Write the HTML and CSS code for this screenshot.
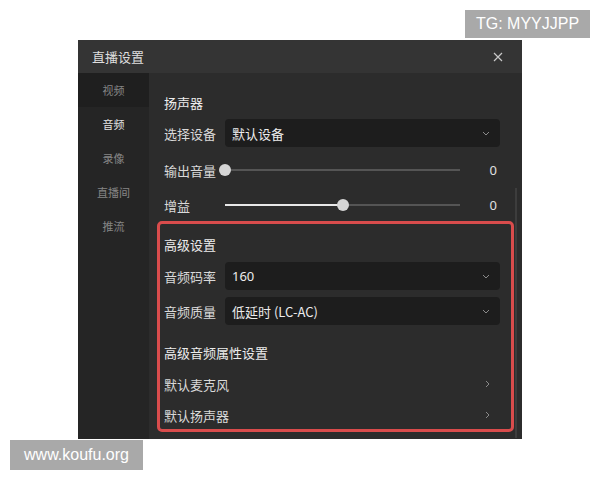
FILE: index.html
```html
<!DOCTYPE html>
<html lang="zh-CN">
<head>
    <meta charset="UTF-8">
    <title>直播设置</title>
    <link rel="stylesheet" href="styles.css">
</head>
<body>
    <div class="page">
        <div class="badge badge-tg">TG: MYYJJPP</div>

        <div class="dialog">
            <div class="titlebar">
                <span class="title">直播设置</span>
                <svg class="close" width="10" height="10" viewBox="0 0 10 10">
                    <path d="M1 1L9 9M9 1L1 9" stroke="#c8c8c8" stroke-width="1.2" fill="none"/>
                </svg>
            </div>
            <div class="main">
                <div class="sidebar">
                    <div class="nav-item hover">视频</div>
                    <div class="nav-item active">音频</div>
                    <div class="nav-item">录像</div>
                    <div class="nav-item">直播间</div>
                    <div class="nav-item">推流</div>
                </div>

                <div class="content">
                    <div class="scrollbar"></div>

                    <div class="section">
                        <div class="heading first">扬声器</div>
                        <div class="row">
                            <div class="label">选择设备</div>
                            <div class="select">
                                <span>默认设备</span>
                                <svg width="8" height="5" viewBox="0 0 8 5"><path d="M1 1L4 4L7 1" stroke="#8a8a8a" fill="none"/></svg>
                            </div>
                        </div>
                        <div class="row slider-row first-slider">
                            <div class="label">输出音量</div>
                            <div class="slider">
                                <div class="track"></div>
                                <div class="fill" style="width: 0%"></div>
                                <div class="knob" style="left: 0%"></div>
                            </div>
                            <div class="value">0</div>
                        </div>
                        <div class="row slider-row">
                            <div class="label">增益</div>
                            <div class="slider">
                                <div class="track"></div>
                                <div class="fill" style="width: 50%"></div>
                                <div class="knob" style="left: 50%"></div>
                            </div>
                            <div class="value">0</div>
                        </div>
                    </div>

                    <div class="advanced">
                        <div class="heading">高级设置</div>
                        <div class="row">
                            <div class="label">音频码率</div>
                            <div class="select">
                                <span class="latin">160</span>
                                <svg width="8" height="5" viewBox="0 0 8 5"><path d="M1 1L4 4L7 1" stroke="#8a8a8a" fill="none"/></svg>
                            </div>
                        </div>
                        <div class="row">
                            <div class="label">音频质量</div>
                            <div class="select">
                                <span>低延时 (LC-AC)</span>
                                <svg width="8" height="5" viewBox="0 0 8 5"><path d="M1 1L4 4L7 1" stroke="#8a8a8a" fill="none"/></svg>
                            </div>
                        </div>
                        <div class="heading sub">高级音频属性设置</div>
                        <div class="row link-row first-link">
                            <span>默认麦克风</span>
                            <svg width="5" height="8" viewBox="0 0 5 8"><path d="M1 1L4 4L1 7" stroke="#8a8a8a" fill="none"/></svg>
                        </div>
                        <div class="row link-row">
                            <span>默认扬声器</span>
                            <svg width="5" height="8" viewBox="0 0 5 8"><path d="M1 1L4 4L1 7" stroke="#8a8a8a" fill="none"/></svg>
                        </div>
                    </div>
                </div>
            </div>
        </div>

        <div class="badge badge-site">www.koufu.org</div>
    </div>
</body>
</html>
```

FILE: styles.css
```css
body {
    margin: 0;
    background: #fff;
    font-family: "Noto Sans CJK SC", "Noto Sans", sans-serif;
}
.page {
    position: relative;
    width: 600px;
    height: 480px;
    overflow: hidden;
    padding-top: 40px;
    box-sizing: border-box;
}
.badge {
    position: absolute;
    background: #a9a9a9;
    color: #fff;
    font-family: "Liberation Sans", Arial, sans-serif;
    font-size: 16px;
    display: flex;
    align-items: center;
    justify-content: center;
}
.badge-tg {
    left: 465px;
    top: 10px;
    width: 125px;
    height: 28px;
}
.badge-site {
    left: 10px;
    top: 440px;
    width: 133px;
    height: 30px;
}
.dialog {
    margin-left: 78px;
    width: 444px;
    height: 399px;
    background: #2c2c2c;
    display: flex;
    flex-direction: column;
}
.titlebar {
    height: 33px;
    background: #343434;
    display: flex;
    align-items: center;
    justify-content: space-between;
    padding: 0 19px 0 14px;
    flex-shrink: 0;
}
.title {
    color: #dedede;
    font-size: 13px;
}
.main {
    flex: 1;
    display: flex;
}
.sidebar {
    width: 71px;
    background: #252525;
    flex-shrink: 0;
}
.nav-item {
    height: 34px;
    line-height: 34px;
    text-align: center;
    font-size: 11px;
    color: #858585;
}
.nav-item.hover {
    background: #1f1f1f;
}
.nav-item.active {
    color: #e2e2e2;
}
.content {
    position: relative;
    flex: 1;
    padding: 0 8px;
}
.scrollbar {
    position: absolute;
    right: 5px;
    top: 115px;
    width: 2px;
    height: 250px;
    background: #3d3d3d;
}
.section {
    padding: 0 14px 0 7px;
}
.heading {
    height: 20px;
    line-height: 20px;
    font-size: 13px;
    color: #ececec;
    margin-top: 11px;
}
.heading.first {
    margin-top: 20px;
}
.heading.sub {
    margin-top: 18px;
}
.row {
    display: flex;
    align-items: center;
    height: 28px;
    margin-top: 6px;
    font-size: 13px;
    color: #d9d9d9;
}
.slider-row {
    margin-top: 7px;
}
.slider-row.first-slider {
    margin-top: 9px;
}
.label {
    width: 61px;
    flex-shrink: 0;
}
.select {
    flex: 1;
    height: 28px;
    background: #1d1d1d;
    border-radius: 4px;
    display: flex;
    align-items: center;
    justify-content: space-between;
    padding: 0 10px 0 7px;
    color: #ececec;
}
.slider {
    position: relative;
    flex: 1;
    height: 12px;
}
.track {
    position: absolute;
    left: 0;
    right: 0;
    top: 5px;
    height: 2px;
    background: #555;
}
.fill {
    position: absolute;
    left: 0;
    top: 5px;
    height: 2px;
    background: #e8e8e8;
}
.knob {
    position: absolute;
    top: 0;
    width: 12px;
    height: 12px;
    margin-left: -6px;
    border-radius: 50%;
    background: #d6d6d6;
}
.value {
    width: 40px;
    text-align: right;
    padding-right: 3px;
    box-sizing: border-box;
    font-family: "Noto Sans", sans-serif;
    color: #e0e0e0;
}
.advanced {
    margin-top: 2px;
    border: 3px solid #d94c4c;
    border-radius: 5px;
    padding: 0 11px 0 4px;
    height: 211px;
    box-sizing: border-box;
}
.advanced .row {
    margin-top: 7px;
}
.advanced .link-row {
    justify-content: space-between;
    padding-right: 10px;
    margin-top: 3px;
}
.advanced .link-row.first-link {
    margin-top: 7px;
}
.latin {
    font-family: "Noto Sans", sans-serif;
}
```
